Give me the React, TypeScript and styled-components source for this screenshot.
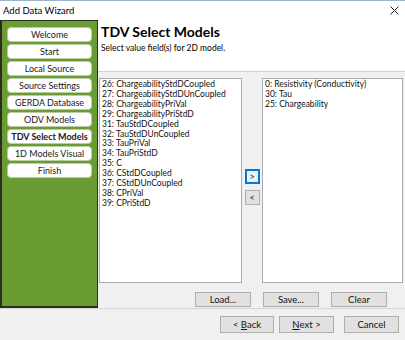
import React from "react";
import styled, { createGlobalStyle } from "styled-components";

const Global = createGlobalStyle`
  html, body { margin: 0; padding: 0; background: #f0f0f0; }
  body { font-family: Lato, "Noto Sans", "Liberation Sans", sans-serif; color: #000; }
  * { box-sizing: border-box; }
`;

const Window = styled.div`
  width: 405px;
  height: 340px;
  display: flex;
  flex-direction: column;
  background: #f0f0f0;
  overflow: hidden;
`;

const TitleBar = styled.div`
  height: 20px;
  background: #fff;
  display: flex;
  align-items: center;
  justify-content: space-between;
  padding: 0 6px 0 3px;
  font-size: 9.5px;
  border-top: 1px solid #9ab3cc;
`;

const Main = styled.div`
  display: flex;
  height: 289px;
  border-bottom: 1px solid #d5d5d5;
`;

const Sidebar = styled.nav`
  width: 100px;
  background: #6b9b33;
  border: 1px solid #26301c;
  border-left-width: 2px;
  border-bottom-width: 2px;
  padding: 6px 5px 0 5px;
  display: flex;
  flex-direction: column;
  gap: 2px;
`;

const NavButton = styled.div<{ $active?: boolean }>`
  height: 15px;
  background: #fff;
  border: 1px solid #b9cca3;
  border-radius: 4px;
  display: flex;
  align-items: center;
  justify-content: center;
  font-size: 9px;
  font-weight: ${(p) => (p.$active ? 700 : 400)};
  color: #1a1a1a;
`;

const Content = styled.div`
  flex: 1;
  display: flex;
  flex-direction: column;
`;

const Header = styled.div`
  height: 52px;
  background: #fff;
  border-bottom: 1px solid #d0d0d0;
  padding: 3px 3px;
`;

const Title = styled.div`
  font-size: 14px;
  font-weight: 700;
  line-height: 18px;
`;

const Subtitle = styled.div`
  font-size: 8.5px;
  line-height: 11px;
  margin-top: 2px;
`;

const Body = styled.div`
  flex: 1;
  display: flex;
  flex-direction: column;
  padding: 6px 2px 0 1px;
`;

const ListsRow = styled.div`
  display: flex;
  height: 205px;
`;

const ListBox = styled.div<{ $w: number }>`
  width: ${(p) => p.$w}px;
  background: #fff;
  border: 1px solid #a9abb0;
  padding: 1px 2px 0;
  font-size: 8.5px;
  line-height: 9.9px;
  white-space: nowrap;
  overflow: hidden;
  color: #111;
`;

const ArrowCol = styled.div`
  width: 20px;
  display: flex;
  flex-direction: column;
  align-items: center;
  justify-content: center;
  gap: 6px;
  padding-top: 12px;
`;

const ArrowBtn = styled.div<{ $focus?: boolean }>`
  width: 15px;
  height: 15px;
  background: ${(p) => (p.$focus ? "#e5f1fb" : "#e1e1e1")};
  border: ${(p) => (p.$focus ? "2px solid #0078d7" : "1px solid #adadad")};
  display: flex;
  align-items: center;
  justify-content: center;
  font-size: 9px;
  color: #222;
`;

const ButtonRow = styled.div`
  display: flex;
  justify-content: flex-end;
  gap: 12px;
  padding: 9px 16px 0 0;
`;

const Btn = styled.div<{ $w: number; $h: number }>`
  width: ${(p) => p.$w}px;
  height: ${(p) => p.$h}px;
  background: #e1e1e1;
  border: 1px solid #adadad;
  display: flex;
  align-items: center;
  justify-content: center;
  font-size: 9.5px;
  color: #111;
`;

const Footer = styled.div`
  flex: 1;
  display: flex;
  justify-content: flex-end;
  align-items: flex-start;
  padding: 7px 6px 0 0;
`;

const FooterGroup = styled.div`
  display: flex;
  gap: 5px;
  margin-right: 10px;
`;

const U = styled.span`
  text-decoration: underline;
`;

const left = [
  "26: ChargeabilityStdDCoupled",
  "27: ChargeabilityStdDUnCoupled",
  "28: ChargeabilityPriVal",
  "29: ChargeabilityPriStdD",
  "31: TauStdDCoupled",
  "32: TauStdDUnCoupled",
  "33: TauPriVal",
  "34: TauPriStdD",
  "35: C",
  "36: CStdDCoupled",
  "37: CStdDUnCoupled",
  "38: CPriVal",
  "39: CPriStdD",
];

const right = ["0: Resistivity (Conductivity)", "30: Tau", "25: Chargeability"];

const nav = [
  "Welcome",
  "Start",
  "Local Source",
  "Source Settings",
  "GERDA Database",
  "ODV Models",
  "TDV Select Models",
  "1D Models Visual",
  "Finish",
];

export default function App() {
  return (
    <Window>
      <Global />
      <TitleBar>
        <span>Add Data Wizard</span>
        <svg width="9" height="9" viewBox="0 0 9 9">
          <path d="M0.5 0.5 L8.5 8.5 M8.5 0.5 L0.5 8.5" stroke="#222" strokeWidth="1" />
        </svg>
      </TitleBar>
      <Main>
        <Sidebar>
          {nav.map((n) => (
            <NavButton key={n} $active={n === "TDV Select Models"}>
              {n}
            </NavButton>
          ))}
        </Sidebar>
        <Content>
          <Header>
            <Title>TDV Select Models</Title>
            <Subtitle>Select value field(s) for 2D model.</Subtitle>
          </Header>
          <Body>
            <ListsRow>
              <ListBox $w={143}>
                {left.map((t) => (
                  <div key={t}>{t}</div>
                ))}
              </ListBox>
              <ArrowCol>
                <ArrowBtn $focus>&gt;</ArrowBtn>
                <ArrowBtn>&lt;</ArrowBtn>
              </ArrowCol>
              <ListBox $w={141}>
                {right.map((t) => (
                  <div key={t}>{t}</div>
                ))}
              </ListBox>
            </ListsRow>
            <ButtonRow>
              <Btn $w={56} $h={15}>Load...</Btn>
              <Btn $w={56} $h={15}>Save...</Btn>
              <Btn $w={56} $h={15}>Clear</Btn>
            </ButtonRow>
          </Body>
        </Content>
      </Main>
      <Footer>
        <FooterGroup>
          <Btn $w={54} $h={17}>&lt;&nbsp;<U>B</U>ack</Btn>
          <Btn $w={55} $h={17}><U>N</U>ext &gt;</Btn>
        </FooterGroup>
        <Btn $w={55} $h={17}>Cancel</Btn>
      </Footer>
    </Window>
  );
}
